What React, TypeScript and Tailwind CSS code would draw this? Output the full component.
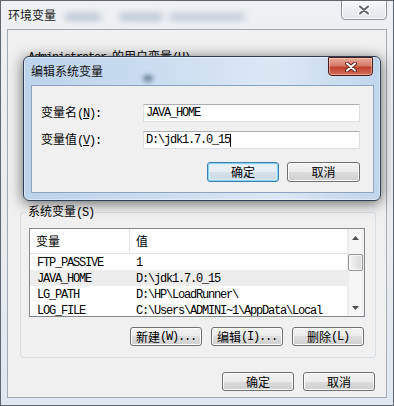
import React from "react";

function Mono({ children }: { children: React.ReactNode }) {
  return (
    <span className="font-['Liberation_Mono',monospace] text-[12px] tracking-[-1.2px]">
      {children}
    </span>
  );
}

function Btn({
  children,
  primary = false,
  className = "",
}: {
  children: React.ReactNode;
  primary?: boolean;
  className?: string;
}) {
  return (
    <button
      className={
        "flex items-center justify-center rounded-[3px] border text-black " +
        (primary
          ? "border-[#3c7fb1] bg-[linear-gradient(180deg,#eef3f7_0%,#e5ecf2_50%,#d6e1ea_50%,#cbd8e3_100%)] shadow-[inset_0_0_0_1px_#86d3f3,inset_0_0_0_2px_#d3effb] "
          : "border-[#707070] bg-[linear-gradient(180deg,#f2f2f2_0%,#ebebeb_50%,#dddddd_50%,#cfcfcf_100%)] shadow-[inset_0_0_0_1px_#fbfbfb] ") +
        className
      }
    >
      {children}
    </button>
  );
}

function CloseX({ light = false }: { light?: boolean }) {
  return (
    <svg width="12" height="10" viewBox="0 0 12 10">
      <path
        d="M2 1.5 L10 8.5 M10 1.5 L2 8.5"
        stroke={light ? "#5a2218" : "#ffffff"}
        strokeWidth="4"
        strokeLinecap="round"
      />
      <path
        d="M2 1.5 L10 8.5 M10 1.5 L2 8.5"
        stroke={light ? "#ffffff" : "#5f6468"}
        strokeWidth="2"
        strokeLinecap="round"
      />
    </svg>
  );
}

const rows = [
  { name: "FTP_PASSIVE", value: "1" },
  { name: "JAVA_HOME", value: "D:\\jdk1.7.0_15", selected: true },
  { name: "LG_PATH", value: "D:\\HP\\LoadRunner\\" },
  { name: "LOG_FILE", value: "C:\\Users\\ADMINI~1\\AppData\\Local" },
];

export default function App() {
  return (
    <div className="relative w-[394px] h-[406px] overflow-hidden border border-[#5e6670] bg-[linear-gradient(180deg,#eef0f3_0%,#e9ecef_60%,#dfe7f0_100%)] font-['Noto_Sans_CJK_SC',sans-serif] text-[12px] leading-[14px] text-black">
      {/* Outer title bar */}
      <div className="relative h-[28px] flex items-center pl-[7px]">
        <span className="text-[#1a1a1a]">环境变量</span>
        <div className="absolute left-[64px] top-[12px] w-[36px] h-[8px] rounded-full bg-[#a9b6c8] blur-[3px] opacity-70" />
        <div className="absolute left-[118px] top-[12px] w-[44px] h-[8px] rounded-full bg-[#aab8cc] blur-[3px] opacity-70" />
        <div className="absolute left-[168px] top-[12px] w-[76px] h-[8px] rounded-full bg-[#aab7c9] blur-[3px] opacity-60" />
        <div className="absolute right-[6px] top-[-1px] w-[46px] h-[20px] rounded-b-[4px] border border-[#8b94a0] bg-[linear-gradient(180deg,#f7f8fa_0%,#eceef1_50%,#e2e5ea_100%)] shadow-[inset_0_0_0_1px_rgba(255,255,255,0.8)] flex items-center justify-center">
          <CloseX />
        </div>
      </div>

      {/* Outer client area */}
      <div className="mx-[6px] h-[369px] border border-[#a3abb5] bg-[#f0f0f0] flex flex-col">
        <div className="pt-[19px] pl-[20px]">
          <Mono>Administrator </Mono>
          <span>的用户变量</span>
          <Mono>(U)</Mono>
        </div>
        <div className="h-[139px]" />

        <fieldset className="ml-[12px] mr-[10px] border border-[#d5dfe5] rounded-[3px]">
          <legend className="ml-[5px] px-[2px]">
            <span>系统变量</span>
            <Mono>(S)</Mono>
          </legend>

          <div className="ml-[8px] mt-[8px] w-[336px] h-[89px] border border-[#828790] bg-white flex overflow-hidden">
            <div className="flex-1 flex flex-col">
              <div className="h-[25px] shrink-0 flex border-b border-[#e5e5e5]">
                <div className="w-[100px] pl-[6px] flex items-center border-r border-[#e5e5e5]">变量</div>
                <div className="flex-1 pl-[6px] flex items-center">值</div>
              </div>
              {rows.map((r) => (
                <div
                  key={r.name}
                  className={"h-[16px] shrink-0 flex items-center " + (r.selected ? "bg-[#ededed]" : "")}
                >
                  <div className="w-[100px] pl-[7px]">
                    <Mono>{r.name}</Mono>
                  </div>
                  <div className="flex-1 pl-[6px] whitespace-nowrap">
                    <Mono>{r.value}</Mono>
                  </div>
                </div>
              ))}
            </div>
            {/* Scrollbar */}
            <div className="w-[17px] shrink-0 flex flex-col bg-[linear-gradient(90deg,#e9e9e9_0%,#f6f6f6_20%,#f6f6f6_80%,#ececec_100%)]">
              <div className="h-[17px] flex items-center justify-center">
                <svg width="7" height="4" viewBox="0 0 7 4">
                  <path d="M0 4 L3.5 0 L7 4 Z" fill="#4d4d4d" />
                </svg>
              </div>
              <div className="h-[8px]" />
              <div className="mx-[1px] h-[17px] rounded-[2px] border border-[#979797] bg-[linear-gradient(90deg,#f4f4f4_0%,#e8e8e8_50%,#d9d9d9_100%)] shadow-[inset_0_0_0_1px_rgba(255,255,255,0.7)]" />
              <div className="flex-1" />
              <div className="h-[17px] flex items-center justify-center">
                <svg width="7" height="4" viewBox="0 0 7 4">
                  <path d="M0 0 L7 0 L3.5 4 Z" fill="#4d4d4d" />
                </svg>
              </div>
            </div>
          </div>

          <div className="mt-[10px] pr-[11px] pb-[11px] flex justify-end gap-[9px]">
            <Btn className="w-[72px] h-[19px]">
              <span>新建</span>
              <Mono>(W)...</Mono>
            </Btn>
            <Btn className="w-[72px] h-[19px]">
              <span>编辑</span>
              <Mono>(I)...</Mono>
            </Btn>
            <Btn className="w-[72px] h-[19px]">
              <span>删除</span>
              <Mono>(L)</Mono>
            </Btn>
          </div>
        </fieldset>

        <div className="mt-[14px] pr-[11px] flex justify-end gap-[9px]">
          <Btn className="w-[72px] h-[19px]">确定</Btn>
          <Btn className="w-[72px] h-[19px]">取消</Btn>
        </div>
      </div>

      {/* Edit system variable dialog */}
      <div className="absolute left-[22px] top-[55px] w-[358px] h-[145px] rounded-[6px] border border-[#2f3f53] bg-[linear-gradient(90deg,#bcd3ec_0%,#c9dcf0_35%,#dde8f5_70%,#c0d5ed_100%)] shadow-[0_2px_14px_rgba(0,0,0,0.6),inset_0_0_0_1px_rgba(255,255,255,0.45)] flex flex-col pl-[7px] pr-[6px] pb-[7px]">
        <div className="relative h-[28px] shrink-0 flex items-center">
          <span className="text-[#111]">编辑系统变量</span>
          <div className="absolute left-[112px] top-[18px] w-[10px] h-[7px] rounded-full bg-[#3f5670] blur-[2px] opacity-60" />
        </div>
        <div className="absolute right-[7px] top-0 w-[45px] h-[19px] rounded-b-[4px] border border-[#4e1a12] bg-[linear-gradient(180deg,#eaaa9c_0%,#d67a67_45%,#c2432f_55%,#d06e5a_100%)] shadow-[inset_0_0_0_1px_rgba(255,220,210,0.5)] flex items-center justify-center">
          <CloseX light />
        </div>

        <div className="flex-1 border border-[#8ca4c0] bg-[#f0f0f0] pt-[18px] pl-[9px] pr-[13px] flex flex-col">
          <div className="flex items-center h-[18px]">
            <div className="w-[103px]">
              <span>变量名</span>
              <Mono>
                (<u>N</u>):
              </Mono>
            </div>
            <div className="w-[219px] h-[18px] border border-[#dbdfe6] border-t-[#abadb3] bg-white pl-[2px] flex items-center">
              <Mono>JAVA_HOME</Mono>
            </div>
          </div>
          <div className="mt-[9px] flex items-center h-[18px]">
            <div className="w-[103px]">
              <span>变量值</span>
              <Mono>
                (<u>V</u>):
              </Mono>
            </div>
            <div className="w-[219px] h-[18px] border border-[#dbdfe6] border-t-[#abadb3] bg-white pl-[2px] flex items-center">
              <Mono>D:\jdk1.7.0_15</Mono>
              <span className="w-px h-[13px] bg-black" />
            </div>
          </div>
          <div className="mt-[13px] flex justify-end gap-[8px]">
            <Btn primary className="w-[72px] h-[20px]">
              确定
            </Btn>
            <Btn className="w-[73px] h-[20px]">取消</Btn>
          </div>
        </div>
      </div>
    </div>
  );
}
